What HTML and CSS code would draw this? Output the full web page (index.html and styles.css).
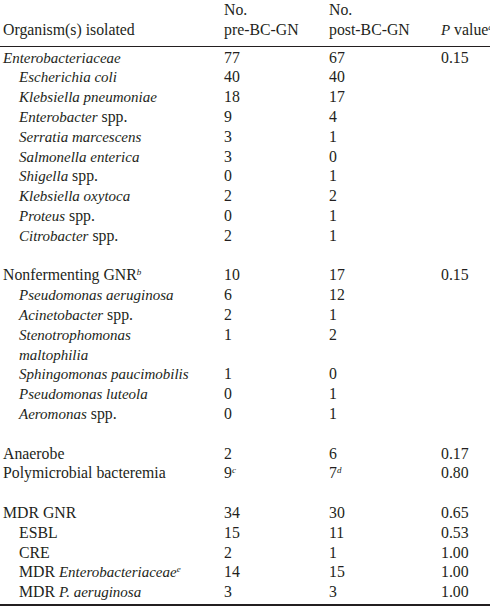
FILE: index.html
```html
<!DOCTYPE html>
<html lang="en">
<head>
  <meta charset="UTF-8" />
  <title>Organisms isolated</title>
  <link rel="stylesheet" href="styles.css">
</head>
<body>
  <table class="isolates">
    <colgroup>
      <col class="col-name">
      <col class="col-pre">
      <col class="col-post">
      <col class="col-pval">
    </colgroup>
    <thead>
      <tr>
        <th class="name">Organism(s) isolated</th>
        <th>No.<br>pre-BC-GN</th>
        <th>No.<br>post-BC-GN</th>
        <th><i>P</i> value<sup><i>a</i></sup></th>
      </tr>
    </thead>
    <tbody>
      <tr class="first"><td class="name"><i>Enterobacteriaceae</i></td><td>77</td><td>67</td><td>0.15</td></tr>
      <tr><td class="name sub"><i>Escherichia coli</i></td><td>40</td><td>40</td><td></td></tr>
      <tr><td class="name sub"><i>Klebsiella pneumoniae</i></td><td>18</td><td>17</td><td></td></tr>
      <tr><td class="name sub"><i>Enterobacter</i> spp.</td><td>9</td><td>4</td><td></td></tr>
      <tr><td class="name sub"><i>Serratia marcescens</i></td><td>3</td><td>1</td><td></td></tr>
      <tr><td class="name sub"><i>Salmonella enterica</i></td><td>3</td><td>0</td><td></td></tr>
      <tr><td class="name sub"><i>Shigella</i> spp.</td><td>0</td><td>1</td><td></td></tr>
      <tr><td class="name sub"><i>Klebsiella oxytoca</i></td><td>2</td><td>2</td><td></td></tr>
      <tr><td class="name sub"><i>Proteus</i> spp.</td><td>0</td><td>1</td><td></td></tr>
      <tr><td class="name sub"><i>Citrobacter</i> spp.</td><td>2</td><td>1</td><td></td></tr>
      <tr class="gap"><td colspan="4"></td></tr>
      <tr><td class="name">Nonfermenting GNR<sup><i>b</i></sup></td><td>10</td><td>17</td><td>0.15</td></tr>
      <tr><td class="name sub"><i>Pseudomonas aeruginosa</i></td><td>6</td><td>12</td><td></td></tr>
      <tr><td class="name sub"><i>Acinetobacter</i> spp.</td><td>2</td><td>1</td><td></td></tr>
      <tr><td class="name sub"><i>Stenotrophomonas</i><br><i>maltophilia</i></td><td>1</td><td>2</td><td></td></tr>
      <tr><td class="name sub"><i>Sphingomonas paucimobilis</i></td><td>1</td><td>0</td><td></td></tr>
      <tr><td class="name sub"><i>Pseudomonas luteola</i></td><td>0</td><td>1</td><td></td></tr>
      <tr><td class="name sub"><i>Aeromonas</i> spp.</td><td>0</td><td>1</td><td></td></tr>
      <tr class="gap"><td colspan="4"></td></tr>
      <tr><td class="name">Anaerobe</td><td>2</td><td>6</td><td>0.17</td></tr>
      <tr><td class="name">Polymicrobial bacteremia</td><td>9<sup><i>c</i></sup></td><td>7<sup><i>d</i></sup></td><td>0.80</td></tr>
      <tr class="gap"><td colspan="4"></td></tr>
      <tr><td class="name">MDR GNR</td><td>34</td><td>30</td><td>0.65</td></tr>
      <tr><td class="name sub">ESBL</td><td>15</td><td>11</td><td>0.53</td></tr>
      <tr><td class="name sub">CRE</td><td>2</td><td>1</td><td>1.00</td></tr>
      <tr><td class="name sub">MDR <i>Enterobacteriaceae</i><sup><i>e</i></sup></td><td>14</td><td>15</td><td>1.00</td></tr>
      <tr class="last"><td class="name sub">MDR <i>P. aeruginosa</i></td><td>3</td><td>3</td><td>1.00</td></tr>
    </tbody>
  </table>
</body>
</html>
```

FILE: styles.css
```css
body {
  margin: 0;
  background: #fff;
  color: #231f20;
  font-family: "Liberation Serif", "Times New Roman", serif;
  font-size: 15.8px;
  line-height: 19.8px;
}

i {
  font-size: 15px;
  line-height: 1;
}

.isolates {
  width: 490px;
  table-layout: fixed;
  border-collapse: collapse;
}

.col-name { width: 224px; }
.col-pre { width: 105px; }
.col-post { width: 112px; }
.col-pval { width: 49px; }

.isolates th,
.isolates td {
  padding: 0;
  text-align: left;
  font-weight: normal;
  vertical-align: top;
  white-space: nowrap;
  overflow: visible;
}

.isolates th {
  vertical-align: bottom;
  padding-bottom: 6px;
  border-bottom: 1px solid #231f20;
}

.isolates .name {
  padding-left: 3px;
}

.isolates .name.sub {
  padding-left: 19px;
}

.isolates tr.first td {
  padding-top: 1px;
}

.isolates tr.gap td {
  height: 19.8px;
}

.isolates tr.last td {
  padding-bottom: 2px;
  border-bottom: 2px solid #231f20;
}

sup {
  line-height: 0;
  vertical-align: 5px;
}

sup i {
  font-size: 9px;
}
```
